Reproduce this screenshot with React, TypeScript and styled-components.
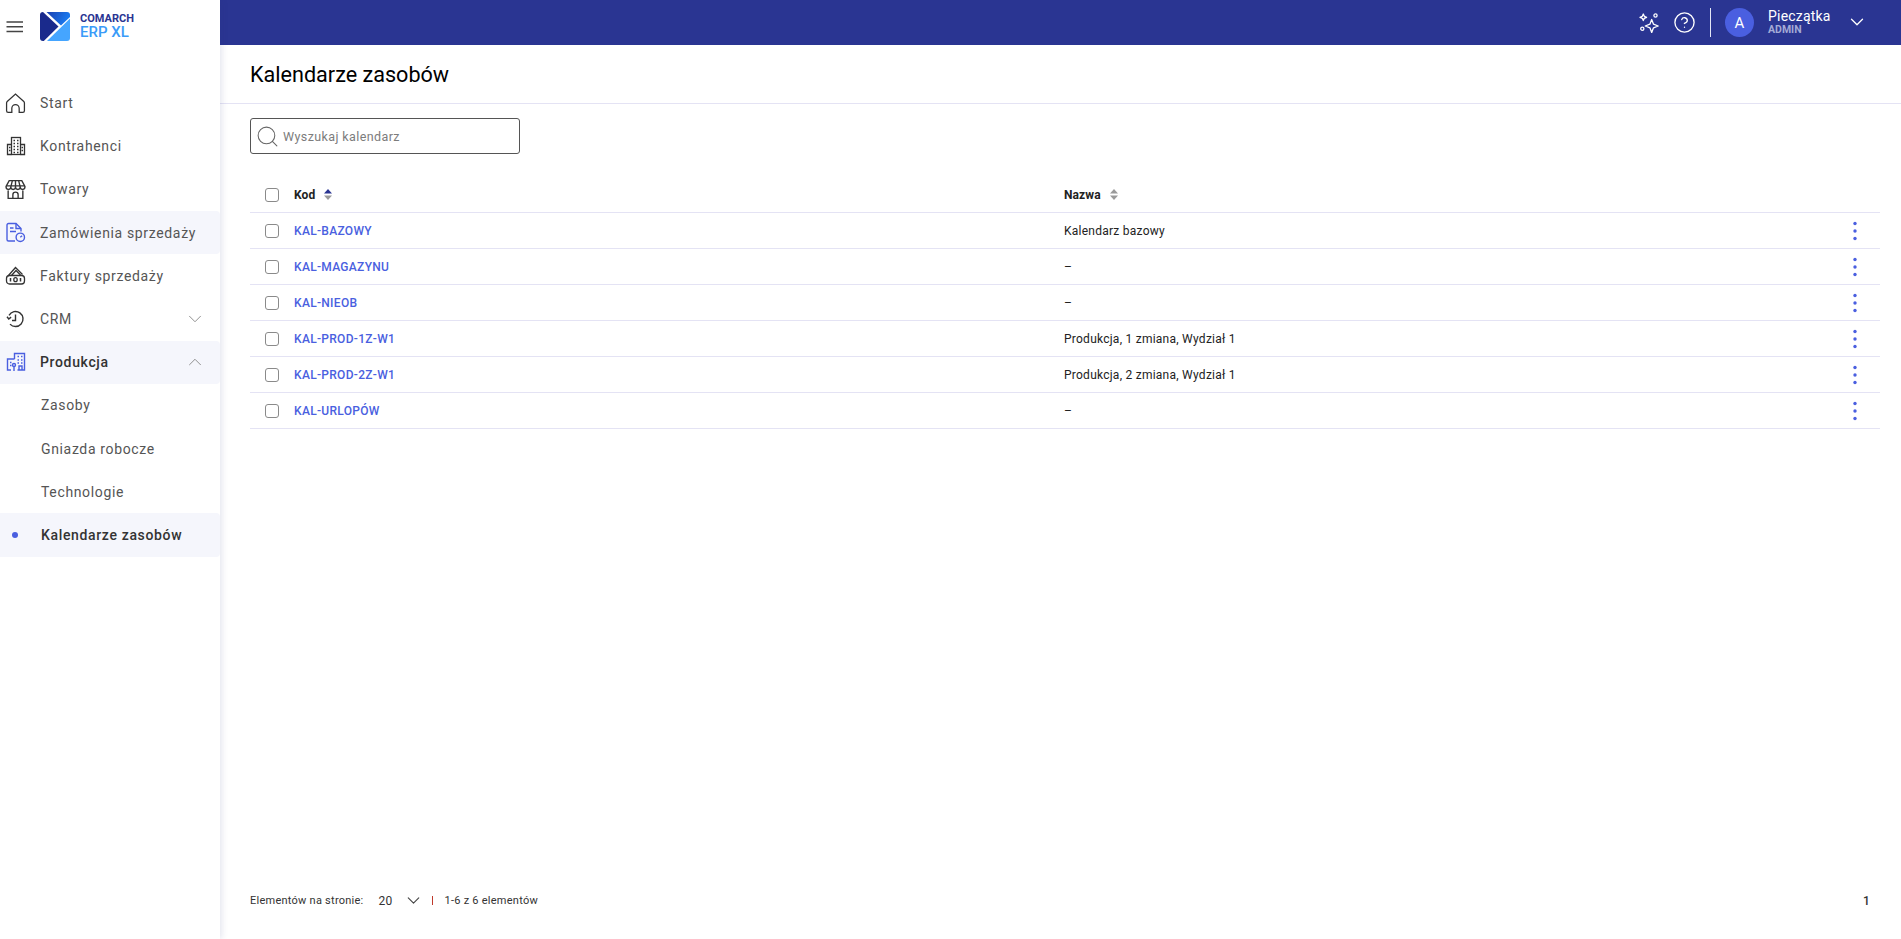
import React from 'react';
import styled, { createGlobalStyle } from 'styled-components';
import { ChevronDown, ChevronUp, Search, CircleHelp } from 'lucide-react';

const GlobalStyle = createGlobalStyle`
  html, body {
    margin: 0;
    padding: 0;
    height: 100%;
    background: #fff;
    font-family: Roboto, "Liberation Sans", sans-serif;
  }
  #root { height: 100%; }
`;

const BurgerIcon = () => (
  <svg width="18" height="12" viewBox="0 0 18 12" stroke="#444" strokeWidth="1.5">
    <path d="M.5 1h16.500M.5 5.800h16.500M.5 10.600h16.500" />
  </svg>
);

const HomeIcon = () => (
  <svg width="21" height="21" viewBox="0 0 20 20" fill="none" stroke="#333" strokeWidth="1.2">
    <path d="M1.500 17V9.500c0-.6.2-1 .6-1.400L10 1l7.900 7.100c.4.4.6.8.6 1.400V17a1.500 1.500 0 0 1-1.500 1.500H13.500v-4a3.500 3.500 0 0 0-7 0v4H3A1.500 1.500 0 0 1 1.500 17z" />
  </svg>
);

const BuildingIcon = () => (
  <svg width="20" height="20" viewBox="0 0 20 20" fill="none" stroke="#333" strokeWidth="1.3">
    <rect x="5.500" y="1.500" width="9" height="17" />
    <path d="M5.500 8.500H1.500v10h4M14.500 8.500h4v10h-4" />
    <path d="M7.500 4.500h1.500M11 4.500h1.500M7.500 7.500h1.500M11 7.500h1.500M7.500 10.500h1.500M11 10.500h1.500M7.500 13.500h1.500M11 13.500h1.500M7.500 16.500h1.500M11 16.500h1.500M3 11.500h1.500M3 14.500h1.500M15.500 11.500h1.500M15.500 14.500h1.500" strokeWidth="1.700" />
  </svg>
);

const StoreIcon = () => (
  <svg width="21" height="21" viewBox="0 0 20 20" fill="none" stroke="#333" strokeWidth="1.3">
    <path d="M4 1.500h12l3 5.500v.7a2.250 2.250 0 0 1-4.500 0 2.250 2.250 0 0 1-4.500 0 2.250 2.250 0 0 1-4.500 0 2.250 2.250 0 0 1-4.500 0V7z" />
    <path d="M7 1.500L5.500 7.700M10 1.500v6.200M13 1.500l1.500 6.200M1 6.500h18" />
    <path d="M3 11v7.500h14V11" />
    <path d="M7.500 18.500v-3.500a2.500 2.500 0 0 1 5 0v3.500" />
  </svg>
);

const OrderIcon = () => (
  <svg width="21" height="21" viewBox="0 0 21 21" fill="none" stroke="#4a5fe0" strokeWidth="1.400">
    <path d="M10 19H3.500A1.500 1.500 0 0 1 2 17.500V3a1.500 1.500 0 0 1 1.500-1.500h7.500l5 5v3" />
    <path d="M11 1.500v5h5M5 6h3.500M5 9.500h6" />
    <circle cx="15.300" cy="15.300" r="4.200" />
    <path d="M15.300 15.300l1.800-1.600" />
  </svg>
);

const InvoiceIcon = () => (
  <svg width="21" height="21" viewBox="0 0 21 21" fill="none" stroke="#333" strokeWidth="1.300">
    <path d="M3 11l7.500-8.500 7 7" />
    <path d="M6.500 10.500L11 5.500l4.500 4.500" />
    <rect x="1.500" y="10.500" width="18" height="8.500" rx="3" />
    <path d="M5.500 13v3.500M15.500 13v3.500" strokeWidth="1.500" />
    <ellipse cx="10.500" cy="14.700" rx="1.700" ry="2" />
  </svg>
);

const CrmIcon = () => (
  <svg width="21" height="21" viewBox="0 0 21 21" fill="none" stroke="#333" strokeWidth="1.400">
    <path d="M5 15.100A7.500 7.500 0 1 0 4 6.300" />
    <path d="M2 7.700l1.800 2.300 2.300-1.900" />
    <path d="M10.500 5.500v6H7" />
  </svg>
);

const ProductionIcon = () => (
  <svg width="20" height="20" viewBox="0 0 20 20" fill="none" stroke="#4a5fe0" strokeWidth="1.400">
    <path d="M8.500 7V1.500h10v16.500h-7" />
    <path d="M8.500 7H1.500v11h3.500" />
    <path d="M11.500 4.500h1.500M15 4.500h1.500M11.500 8h1.500M15 8h1.500M11.500 11h1.500M15 11h1.500M4 10.500h1.500M4 13.500h1.500" strokeWidth="1.700" />
    <circle cx="8" cy="13" r="1.500" />
    <path d="M8 14.500v4.500" />
    <path d="M13 18v-4h3v4" />
  </svg>
);

const SparkIcon = () => (
  <svg width="20" height="20" viewBox="0 0 20 20" fill="none" stroke="#fff" strokeWidth="1.300">
    <path d="M12.700 6.500L14.500 11.200 19.200 13 14.500 14.800 12.700 19.500 10.900 14.800 6.200 13 10.900 11.200z" strokeLinejoin="round" />
    <path d="M4.300 1L5.300 3.300 7.600 4.300 5.300 5.300 4.300 7.600 3.300 5.300 1 4.300 3.300 3.300z" strokeLinejoin="round" />
    <circle cx="16.500" cy="2.500" r="1.600" />
    <circle cx="3.300" cy="15.700" r="1.600" />
  </svg>
);

const SortIcon = ({ active }: { active?: boolean }) => (
  <svg width="10" height="11" viewBox="0 0 10 11">
    <path d="M5 0l4 4.500H1z" fill={active ? '#2a3592' : '#9a9a9a'} />
    <path d="M5 11L1 6.500h8z" fill="#9a9a9a" />
  </svg>
);

const KebabIcon = () => (
  <svg width="20" height="20" viewBox="0 0 20 20" fill="#4a5fe0">
    <circle cx="10" cy="2.500" r="1.700" />
    <circle cx="10" cy="10" r="1.700" />
    <circle cx="10" cy="17.500" r="1.700" />
  </svg>
);

const LogoMark = () => (
  <svg width="30" height="29" viewBox="0 0 30 29">
    <defs>
      <linearGradient id="topRight" x1="0" y1="0" x2="1" y2="0.300">
        <stop offset="0" stopColor="#1a3fb0" />
        <stop offset="1" stopColor="#1a7bf0" />
      </linearGradient>
      <clipPath id="logoClip">
        <rect width="30" height="29" rx="3" />
      </clipPath>
    </defs>
    <g clipPath="url(#logoClip)">
      <path d="M0 0h3l15.500 14.500L3.800 29H0z" fill="#1a2a8c" />
      <path d="M6.500 0H30v5l-9 8.500z" fill="url(#topRight)" />
      <path d="M7 29l23-22.500V29z" fill="#45a5ff" />
    </g>
  </svg>
);

const Shell = styled.div`
  display: grid;
  grid-template-columns: 220px 1fr;
  height: 939px;
  width: 1901px;
  overflow: hidden;
`;

const Sidebar = styled.aside`
  display: flex;
  flex-direction: column;
  background: #fff;
  box-shadow: 2px 0 6px rgba(40, 50, 120, 0.12);
  z-index: 2;
`;

const Brand = styled.div`
  display: flex;
  align-items: center;
  height: 53px;
  padding-left: 6px;
  margin-bottom: 28.500px;
`;

const Burger = styled.span`
  display: flex;
  width: 18px;
  margin-right: 16px;
`;

const BrandText = styled.div`
  display: flex;
  flex-direction: column;
  margin-left: 10px;
  font-weight: 700;
  line-height: 1;
`;

const BrandTop = styled.span`
  color: #2a3592;
  font-size: 11px;
`;

const BrandBottom = styled.span`
  color: #3a9bf8;
  font-size: 15px;
  font-weight: 500;
  margin-top: 1px;
`;

const NavItem = styled.div<{ $active?: boolean; $bold?: boolean; $sub?: boolean }>`
  display: flex;
  align-items: center;
  height: 43.200px;
  flex: none;
  padding-left: ${p => (p.$sub ? '41px' : '0')};
  background: ${p => (p.$active ? '#f5f6fc' : 'transparent')};
  border-radius: 0 4px 4px 0;
  color: ${p => (p.$bold ? '#333' : '#555')};
  font-size: 14px;
  letter-spacing: 0.65px;
  font-weight: ${p => (p.$bold ? 500 : 400)};
  position: relative;
`;

const NavIcon = styled.span`
  display: flex;
  justify-content: center;
  width: 31px;
  margin-right: 9px;
`;

const NavLabel = styled.span`
  flex: 1;
`;

const NavChevron = styled.span`
  display: flex;
  color: #888;
  margin-right: 14px;
`;

const Dot = styled.span`
  position: absolute;
  left: 12px;
  top: 19px;
  width: 6px;
  height: 6px;
  border-radius: 50%;
  background: #4a5fe0;
`;

const Main = styled.main`
  display: flex;
  flex-direction: column;
  min-width: 0;
`;

const TopBar = styled.header`
  display: flex;
  align-items: center;
  justify-content: flex-end;
  flex: none;
  height: 45px;
  background: #2a3592;
  color: #fff;
`;

const TopIcon = styled.span`
  display: flex;
  margin-right: 14px;
`;

const Divider = styled.span`
  width: 1px;
  height: 29px;
  background: #e4e6f5;
  margin-right: 14px;
`;

const UserAvatar = styled.span`
  display: flex;
  align-items: center;
  justify-content: center;
  width: 29px;
  height: 29px;
  border-radius: 50%;
  background: #4a5fe0;
  font-size: 15px;
  margin-right: 14px;
`;

const UserText = styled.div`
  display: flex;
  flex-direction: column;
  width: 78px;
  margin-top: -3px;
`;

const UserName = styled.span`
  font-size: 14px;
  line-height: 16px;
  letter-spacing: 0.2px;
`;

const UserRole = styled.span`
  font-size: 10.500px;
  line-height: 11px;
  font-weight: 700;
  color: #a4aad6;
`;

const UserChevron = styled.span`
  display: flex;
  margin-right: 33px;
  margin-top: -2px;
`;

const PageHead = styled.div`
  display: flex;
  align-items: center;
  flex: none;
  height: 58px;
  padding-left: 30px;
  border-bottom: 1px solid #e4e3f4;
`;

const Title = styled.h1`
  margin: 0;
  font-size: 21.600px;
  font-weight: 400;
  color: #000;
`;

const Content = styled.div`
  display: flex;
  flex-direction: column;
  flex: 1;
  padding: 14px 21px 0 30px;
  min-height: 0;
`;

const SearchBox = styled.div`
  display: flex;
  align-items: center;
  box-sizing: border-box;
  width: 270px;
  height: 36px;
  border: 1px solid #555;
  border-radius: 3px;
  padding-left: 4px;
  color: #666;
  margin-bottom: 23px;
`;

const SearchText = styled.span`
  font-size: 12.500px;
  letter-spacing: 0.4px;
  color: #7c7c7c;
  margin-left: 3px;
`;

const Table = styled.div`
  display: flex;
  flex-direction: column;
  flex: 1;
`;

const Row = styled.div`
  display: grid;
  grid-template-columns: 44px 770px 1fr 40px;
  align-items: center;
  box-sizing: border-box;
  height: 36px;
  border-bottom: 1px solid #e4e3f4;
  font-size: 12px;
  letter-spacing: 0.25px;
  color: #222;
`;

const CheckCell = styled.span`
  display: flex;
  padding-left: 15px;
`;

const Checkbox = styled.span`
  display: block;
  box-sizing: border-box;
  width: 14px;
  height: 14px;
  border: 1px solid #8a8a8a;
  border-radius: 3px;
`;

const HeadCell = styled.span`
  display: flex;
  align-items: center;
  gap: 8px;
  font-weight: 700;
  letter-spacing: 0.1px;
  color: #222;
`;

const CodeLink = styled.a`
  color: #4a5fe0;
  font-weight: 500;
  letter-spacing: 0.3px;
  text-decoration: none;
`;

const Kebab = styled.span`
  display: flex;
  margin-left: 5px;
`;

const Footer = styled.footer`
  display: flex;
  align-items: center;
  flex: none;
  height: 47px;
  margin-bottom: 15px;
  font-size: 11px;
  letter-spacing: 0.25px;
  color: #333;
`;

const PerPage = styled.span`
  margin: 0 10px 0 15px;
  font-size: 12px;
`;

const Sep = styled.span`
  width: 1px;
  height: 9px;
  background: #c0392b;
  margin: 0 12px 0 8px;
`;

const PageNumber = styled.span`
  margin-left: auto;
  margin-right: 10px;
  font-weight: 500;
  font-size: 12px;
`;

const navTop = [
  { label: 'Start', icon: <HomeIcon /> },
  { label: 'Kontrahenci', icon: <BuildingIcon /> },
  { label: 'Towary', icon: <StoreIcon /> },
  { label: 'Zamówienia sprzedaży', icon: <OrderIcon />, active: true },
  { label: 'Faktury sprzedaży', icon: <InvoiceIcon /> },
];

const rows = [
  { code: 'KAL-BAZOWY', name: 'Kalendarz bazowy' },
  { code: 'KAL-MAGAZYNU', name: '–' },
  { code: 'KAL-NIEOB', name: '–' },
  { code: 'KAL-PROD-1Z-W1', name: 'Produkcja, 1 zmiana, Wydział 1' },
  { code: 'KAL-PROD-2Z-W1', name: 'Produkcja, 2 zmiana, Wydział 1' },
  { code: 'KAL-URLOPÓW', name: '–' },
];

const App: React.FC = () => (
  <Shell>
    <GlobalStyle />
    <Sidebar>
      <Brand>
        <Burger><BurgerIcon /></Burger>
        <LogoMark />
        <BrandText>
          <BrandTop>COMARCH</BrandTop>
          <BrandBottom>ERP XL</BrandBottom>
        </BrandText>
      </Brand>
      {navTop.map(item => (
        <NavItem key={item.label} $active={item.active}>
          <NavIcon>{item.icon}</NavIcon>
          <NavLabel>{item.label}</NavLabel>
        </NavItem>
      ))}
      <NavItem>
        <NavIcon><CrmIcon /></NavIcon>
        <NavLabel>CRM</NavLabel>
        <NavChevron><ChevronDown size={22} strokeWidth={1} /></NavChevron>
      </NavItem>
      <NavItem $active $bold>
        <NavIcon><ProductionIcon /></NavIcon>
        <NavLabel>Produkcja</NavLabel>
        <NavChevron><ChevronUp size={22} strokeWidth={1} /></NavChevron>
      </NavItem>
      <NavItem $sub>Zasoby</NavItem>
      <NavItem $sub>Gniazda robocze</NavItem>
      <NavItem $sub>Technologie</NavItem>
      <NavItem $sub $active $bold><Dot />Kalendarze zasobów</NavItem>
    </Sidebar>
    <Main>
      <TopBar>
        <TopIcon><SparkIcon /></TopIcon>
        <TopIcon><CircleHelp size={23} strokeWidth={1.4} /></TopIcon>
        <Divider />
        <UserAvatar>A</UserAvatar>
        <UserText>
          <UserName>Pieczątka</UserName>
          <UserRole>ADMIN</UserRole>
        </UserText>
        <UserChevron><ChevronDown size={22} strokeWidth={1.4} /></UserChevron>
      </TopBar>
      <PageHead><Title>Kalendarze zasobów</Title></PageHead>
      <Content>
        <SearchBox>
          <Search size={25} strokeWidth={1} />
          <SearchText>Wyszukaj kalendarz</SearchText>
        </SearchBox>
        <Table>
          <Row>
            <CheckCell><Checkbox /></CheckCell>
            <HeadCell>Kod <SortIcon active /></HeadCell>
            <HeadCell>Nazwa <SortIcon /></HeadCell>
            <span />
          </Row>
          {rows.map(row => (
            <Row key={row.code}>
              <CheckCell><Checkbox /></CheckCell>
              <CodeLink href="#">{row.code}</CodeLink>
              <span>{row.name}</span>
              <Kebab><KebabIcon /></Kebab>
            </Row>
          ))}
        </Table>
        <Footer>
          <span>Elementów na stronie:</span>
          <PerPage>20</PerPage>
          <ChevronDown size={21} strokeWidth={1.3} color="#444" />
          <Sep />
          <span>1-6 z 6 elementów</span>
          <PageNumber>1</PageNumber>
        </Footer>
      </Content>
    </Main>
  </Shell>
);

export default App;
